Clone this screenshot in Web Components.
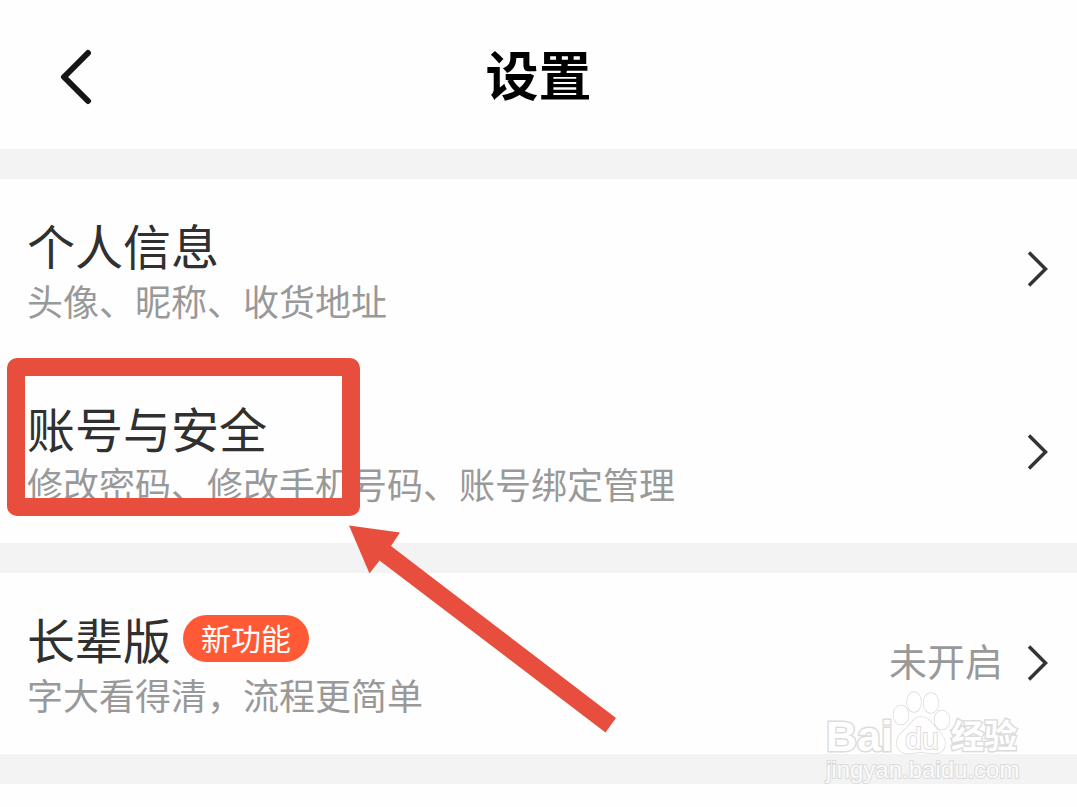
<!DOCTYPE html>
<html lang="zh-CN">
<head>
<meta charset="utf-8">
<meta name="viewport" content="width=device-width, initial-scale=1">
<title>设置</title>
<style>
  body { margin: 0; background: #fefefe; font-family: "Noto Sans CJK SC", sans-serif; }
</style>
</head>
<body>
<settings-page>
  <page-header>设置</page-header>
  <settings-section>
    <settings-row>
      个人信息
      <span slot="detail">头像、昵称、收货地址</span>
    </settings-row>
    <settings-row>
      账号与安全
      <span slot="detail">修改密码、修改手机号码、账号绑定管理</span>
      <highlight-mark slot="mark"></highlight-mark>
    </settings-row>
  </settings-section>
  <settings-section>
    <settings-row>
      长辈版
      <new-badge slot="badge">新功能</new-badge>
      <span slot="detail">字大看得清，流程更简单</span>
      <span slot="status">未开启</span>
    </settings-row>
  </settings-section>
  <site-watermark slot="overlay"></site-watermark>
</settings-page>

<script>
  const define = (name, markup) => {
    const template = document.createElement('template');
    template.innerHTML = markup;
    customElements.define(name, class extends HTMLElement {
      constructor() {
        super();
        this.attachShadow({ mode: 'open' }).append(template.content.cloneNode(true));
      }
    });
  };

  define('settings-page', `
    <style>
      :host { display: block; position: relative; overflow: hidden; min-height: 100vh; }
      main { display: block; }
    </style>
    <main><slot></slot></main>
    <slot name="overlay"></slot>
  `);

  define('page-header', `
    <style>
      :host { display: block; border-bottom: 30px solid #f3f3f3; }
      header { display: grid; grid-template-columns: 92px 1fr 92px; align-items: center; height: 149px; }
      button { display: flex; justify-content: flex-end; padding: 0; border: 0; background: none; cursor: pointer; }
      svg { display: block; width: 34px; height: 60px; }
      h1 { margin: 0; padding-bottom: 4px; text-align: center; font-size: 53px; line-height: 80px; font-weight: 700; color: #000; }
    </style>
    <header>
      <button type="button" aria-label="返回">
        <svg viewBox="0 0 34 60" fill="none" stroke="#161616" stroke-width="6" stroke-linecap="round" stroke-linejoin="round"><path d="M30 8 L6 32 L30 56"/></svg>
      </button>
      <h1><slot></slot></h1>
    </header>
  `);

  define('settings-section', `
    <style>
      :host { display: flex; flex-direction: column; gap: 71px; padding: 38px 28px 31px 27px; border-bottom: 30px solid #f3f3f3; }
    </style>
    <slot></slot>
  `);

  define('settings-row', `
    <style>
      :host { display: block; position: relative; }
      button { display: flex; justify-content: space-between; align-items: flex-start; width: 100%; padding: 0; border: 0; background: none; font: inherit; text-align: left; cursor: pointer; }
      .title { display: flex; align-items: center; gap: 12px; height: 54px; font-size: 48px; line-height: 54px; color: #303030; }
      .detail { display: block; font-size: 36px; line-height: 58px; color: #999; }
      .end { display: flex; align-items: center; gap: 24px; height: 104px; font-size: 38px; line-height: 56px; color: #999; }
      .status { padding-bottom: 6px; }
      svg { display: block; width: 22px; height: 36px; }
    </style>
    <button type="button">
      <span>
        <span class="title"><span><slot></slot></span><slot name="badge"></slot></span>
        <span class="detail"><slot name="detail"></slot></span>
      </span>
      <span class="end">
        <span class="status"><slot name="status"></slot></span>
        <svg viewBox="0 0 22 36" fill="none" stroke="#333" stroke-width="3.500" aria-hidden="true"><path d="M2 1.500 L18.500 18 L2 34.500"/></svg>
      </span>
    </button>
    <slot name="mark"></slot>
  `);

  define('new-badge', `
    <style>
      :host { display: block; padding: 0 18px 2px; border-radius: 24px; background: #ff5a35; color: #fff; font-size: 30px; line-height: 45px; }
    </style>
    <slot></slot>
  `);

  define('highlight-mark', `
    <style>
      :host { display: block; position: absolute; left: -20px; top: -42px; pointer-events: none; }
      .frame { box-sizing: border-box; width: 353px; height: 158px; border: 18px solid #e74e3e; border-radius: 10px; }
      svg { position: absolute; left: 341px; top: 166px; width: 270px; height: 212px; }
    </style>
    <div class="frame"></div>
    <svg viewBox="348 524 270 212" fill="#e74e3e" aria-hidden="true"><path d="M349 525.500 L400 532.500 L391 546 L616 718 L605.500 732.500 L379.500 560.500 L369.500 573.500Z"/></svg>
  `);

  define('site-watermark', `
    <style>
      :host { display: block; position: absolute; right: 57px; top: 690px; width: 194px; pointer-events: none; font-family: "Liberation Sans", "Noto Sans CJK SC", sans-serif; color: #fff; -webkit-text-stroke: 3px #dcdcdc; paint-order: stroke fill; }
      .brand { display: flex; align-items: flex-end; height: 66px; font-size: 43px; line-height: 40px; font-weight: 700; }
      .paw { display: grid; width: 58px; height: 66px; }
      .paw > * { grid-area: 1 / 1; }
      .du { align-self: end; text-align: center; font-size: 30px; line-height: 34px; font-weight: 400; -webkit-text-stroke-width: 2px; }
      .cn { font-family: "Noto Sans CJK SC", sans-serif; font-size: 33px; line-height: 44px; }
      .url { font-size: 24px; line-height: 28px; color: #fafafa; -webkit-text-stroke-width: 2px; }
    </style>
    <div class="brand">
      <span>Bai</span>
      <span class="paw">
        <svg viewBox="0 0 58 66" fill="#fff" stroke="#dcdcdc" stroke-width="1.500" aria-hidden="true">
          <ellipse cx="8" cy="25" rx="7.500" ry="9.500"/><ellipse cx="21" cy="12" rx="7" ry="10"/>
          <ellipse cx="38" cy="13" rx="7.500" ry="10"/><ellipse cx="49" cy="30" rx="7.500" ry="9.500"/>
          <path d="M28 27 C21 27 19 33 14 38 C8 43 3 47 4 54 C5 61 11 65 18 63 C25 62 31 62 38 63 C46 65 52 61 52 53 C52 47 47 43 43 38 C38 32 35 27 28 27Z"/>
        </svg>
        <span class="du">du</span>
      </span>
      <span class="cn">经验</span>
    </div>
    <div class="url">jingyan.baidu.com</div>
  `);
</script>
</body>
</html>
